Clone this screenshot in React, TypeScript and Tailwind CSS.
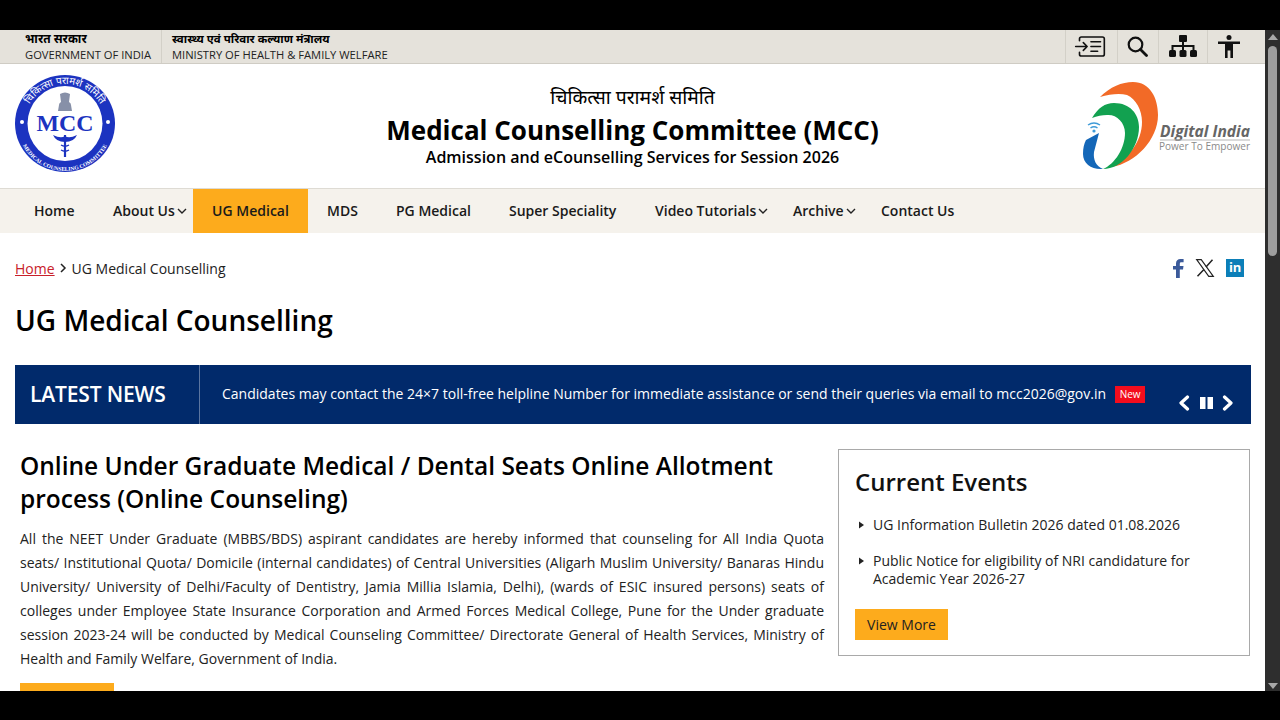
import React from "react";

const font = { fontFamily: '"Open Sans","Noto Sans","Noto Sans CJK SC",sans-serif' };

function MccLogo() {
  return (
    <svg width="100" height="97" viewBox="0 0 100 97" className="shrink-0 -mt-[5px] mr-[2px]">
      <defs>
        <path id="mccTop" d="M9 50 A41 41 0 0 1 91 50" />
        <path id="mccBottom" d="M3 50 A47 46 0 0 0 97 50" />
      </defs>
      <ellipse cx="50" cy="48.5" rx="50" ry="48.5" fill="#1c33c0" />
      <circle cx="50" cy="48.5" r="37.5" fill="#fff" />
      <text fontSize="10" fill="#fff" fontFamily="Noto Sans, sans-serif"><textPath href="#mccTop" startOffset="50%" textAnchor="middle">चिकित्सा परामर्श समिति</textPath></text>
      <text fontSize="5.6" fontWeight="700" fill="#fff" fontFamily="Liberation Serif, serif"><textPath href="#mccBottom" startOffset="50%" textAnchor="middle">MEDICAL COUNSELING COMMITTEE</textPath></text>
      <circle cx="7" cy="47" r="2" fill="#fff" />
      <circle cx="93" cy="47" r="2" fill="#fff" />
      <path d="M45 19 q5 -3 10 0 l-1 8 q2 1 2 3 l1 6 h-14 l1 -6 q0 -2 2 -3z" fill="#8790a8" />
      <text x="50" y="56" textAnchor="middle" fontSize="23" fontWeight="700" fill="#1c33c0" fontFamily="Liberation Serif, serif" textLength="57" lengthAdjust="spacingAndGlyphs">MCC</text>
      <path d="M50 60 L50 82" stroke="#1c33c0" strokeWidth="2.2" />
      <path d="M38 60 q8 4 12 1 q4 3 12 -1 q-3 7 -12 7 q-9 0 -12 -7z" fill="#1c33c0" />
      <path d="M46 70 q4 2.5 8 0 M46 75 q4 2.5 8 0" stroke="#1c33c0" strokeWidth="1.3" fill="none" />
    </svg>
  );
}

function DigitalIndia() {
  return (
    <svg width="174" height="92" viewBox="0 0 174 92" className="shrink-0 -mr-[4px]">
      <path d="M20 17 C30 7 42 2 53 2 C70 2 78 18 78 35 C78 60 55 83 32 87 C48 78 62 62 62 42 C62 30 56 19 47 15 C40 13 30 14 20 17Z" fill="#f26a27" />
      <path d="M12 38 C18 28 25 23 34 23 C50 23 59 34 59 47 C59 68 42 89 23 89 C35 84 45 68 45 53 C45 42 36 34 27 35 C22 35 17 36 12 38Z" fill="#12a150" />
      <path d="M6 60 L19 53 L14 72 C13 80 16 86 23 89 C12 90 3 84 3 74 C3 68 4 64 6 60Z" fill="#1467b8" />
      <path d="M8 45 q6 -4 12 0 M10.5 48 q3.5 -2.5 7 0" stroke="#3f9bd8" strokeWidth="1.5" fill="none" />
      <circle cx="14" cy="51" r="1.6" fill="#3f9bd8" />
      <text x="80" y="57" fontSize="15.5" fontStyle="italic" fontWeight="700" fill="#666" fontFamily="Open Sans, sans-serif" textLength="90" lengthAdjust="spacingAndGlyphs">Digital India</text>
      <path d="M80 60 H170" stroke="#b5b5b5" strokeWidth="1" />
      <text x="79" y="70" fontSize="10" fill="#8a8a8a" fontFamily="Open Sans, sans-serif" textLength="91" lengthAdjust="spacingAndGlyphs">Power To Empower</text>
    </svg>
  );
}

function TopIcon({ children, w }: { children: React.ReactNode; w: string }) {
  return <div className={`h-full flex items-center justify-center border-l border-[#d3d0c8] ${w}`}>{children}</div>;
}

const navItems: [string, boolean, string][] = [
  ["Home", false, "w-[79px]"],
  ["About Us", true, "w-[99px]"],
  ["MDS", false, "w-[69px]"],
  ["PG Medical", false, "w-[113px]"],
  ["Super Speciality", false, "w-[146px]"],
  ["Video Tutorials", true, "w-[138px]"],
  ["Archive", true, "w-[88px]"],
  ["Contact Us", false, "w-[113px]"],
];

function NavItem({ label, caret, w }: { label: string; caret: boolean; w: string }) {
  return (
    <div className={`h-full flex items-center pl-[19px] ${w}`}>
      <span>{label}</span>
      {caret && (
        <svg width="10" height="6" viewBox="0 0 10 6" fill="none" stroke="#222" strokeWidth="1.4" className="ml-[2px] mt-[1px] shrink-0">
          <path d="M1 1 L5 5 L9 1" />
        </svg>
      )}
    </div>
  );
}

export default function App() {
  return (
    <div className="h-[720px] w-[1280px] bg-black flex flex-col overflow-hidden text-[#111]" style={font}>
      <div className="h-[30px] shrink-0" />
      <div className="h-[661px] flex shrink-0">
        <main className="w-[1265px] bg-white overflow-hidden">
          <div className="h-[34px] bg-[#e5e2db] border-b border-[#cfccc4] flex pl-[25px] text-black">
            <div className="w-[137px] border-r border-[#d3d0c8] text-[11.2px] leading-[16px] pt-[1px]">
              <div className="text-[12px] leading-[16px] font-bold">भारत सरकार</div>
              <div className="text-[#222] whitespace-nowrap">GOVERNMENT OF INDIA</div>
            </div>
            <div className="pl-[10px] text-[11.2px] leading-[16px] pt-[1px]">
              <div className="text-[11.5px] font-bold">स्वास्थ्य एवं परिवार कल्याण मंत्रालय</div>
              <div className="text-[#222] whitespace-nowrap">MINISTRY OF HEALTH &amp; FAMILY WELFARE</div>
            </div>
            <div className="ml-auto flex h-full items-center">
              <TopIcon w="w-[52px]">
                <svg width="32" height="21" viewBox="0 0 32 22" fill="none" stroke="#111" strokeWidth="1.7" strokeLinecap="round" strokeLinejoin="round" className="mr-[3px] -mt-[1px]">
                  <path d="M5 5 V3 Q5 1 7 1 H29 Q31 1 31 3 V19 Q31 21 29 21 H7 Q5 21 5 19 V17" />
                  <path d="M1 11 H13 M9 7 L13 11 L9 15 M17 6 H27 M17 11 H27 M17 16 H24" />
                </svg>
              </TopIcon>
              <TopIcon w="w-[41px]">
                <svg width="21" height="21" viewBox="0 0 21 21" fill="none" stroke="#111" strokeWidth="2.2" strokeLinecap="round" className="mr-[1px] -mt-[1px]">
                  <circle cx="8.5" cy="8.5" r="6.8" />
                  <path d="M13.5 13.5 L19.5 19.5" strokeWidth="2.8" />
                </svg>
              </TopIcon>
              <TopIcon w="w-[49px]">
                <svg width="28" height="22" viewBox="0 0 28 22" fill="#111" className="-mt-[1px]">
                  <rect x="10" y="0" width="8" height="7" rx="1" />
                  <rect x="0" y="15" width="7" height="7" rx="1.5" />
                  <rect x="10.5" y="15" width="7" height="7" rx="1.5" />
                  <rect x="21" y="15" width="7" height="7" rx="1.5" />
                  <path d="M13 7 h2 v3 h10.5 v5 h-2 v-3 h-8.5 v3 h-2 v-3 h-8.5 v3 h-2 v-5 h10.5z" />
                </svg>
              </TopIcon>
              <TopIcon w="w-[58px]">
                <svg width="22" height="23" viewBox="0 0 22 23" fill="#111" className="mr-[16px] -mt-[1px]">
                  <circle cx="11" cy="2.5" r="2.5" />
                  <path d="M0 6.5 h22 v2.4 h-7 v14.1 h-2.6 v-7.5 h-2.8 v7.5 h-2.6 v-14.1 h-7z" />
                </svg>
              </TopIcon>
            </div>
          </div>

          <div className="h-[125px] border-b border-[#dedbd4] flex items-center pl-[15px] pr-[15px]">
            <MccLogo />
            <div className="flex-1 text-center text-black pl-[68px] -mt-[5px]">
              <div className="text-[19.3px] leading-[28px]">चिकित्सा परामर्श समिति</div>
              <div className="text-[26px] leading-[38px] font-bold whitespace-nowrap">Medical Counselling Committee (MCC)</div>
              <div className="text-[16px] leading-[16px] font-semibold">Admission and eCounselling Services for Session 2026</div>
            </div>
            <DigitalIndia />
          </div>

          <nav className="h-[44px] bg-[#f5f2ec] flex pl-[15px] pb-[2px] text-[14px] font-semibold text-[#1a1a1a]">
            <NavItem label={navItems[0][0]} caret={navItems[0][1]} w={navItems[0][2]} />
            <NavItem label={navItems[1][0]} caret={navItems[1][1]} w={navItems[1][2]} />
            <div className="h-[44px] w-[115px] bg-[#fdab1c] flex items-center justify-center pb-[2px]">UG Medical</div>
            {navItems.slice(2).map(([l, c, w]) => (
              <NavItem key={l} label={l} caret={c} w={w} />
            ))}
          </nav>

          <div className="h-[70px] flex items-center pl-[15px] pr-[21px] text-[14px] text-[#222]">
            <span className="text-[#c8202a] underline">Home</span>
            <svg width="8" height="10" viewBox="0 0 8 10" fill="none" stroke="#222" strokeWidth="1.5" className="ml-[4px] mr-[5px]"><path d="M2 1 L6 5 L2 9" /></svg>
            <span>UG Medical Counselling</span>
            <div className="ml-auto flex items-center">
              <svg width="11" height="19" viewBox="0 0 11 19" fill="#3b5a9a"><path d="M3 19 V10.5 H0 V7 H3 V4.5 C3 1.5 4.8 0 7.4 0 H10.6 V3.3 H8.3 C7.2 3.3 6.8 3.9 6.8 4.9 V7 H10.5 L10 10.5 H6.8 V19Z" /></svg>
              <svg width="20" height="20" viewBox="0 0 24 24" className="ml-[11px]" fill="none" stroke="#222" strokeWidth="1.4"><path d="M2 2 H7.5 L22 22 H16.5Z" /><path d="M21 2 L13.2 10.8 M10.7 13.7 L3 22" strokeWidth="1.8" /></svg>
              <div className="ml-[11px] w-[18px] h-[18px] bg-[#0c7fb8] text-white text-[13px] font-bold leading-[17px] text-center tracking-tight">in</div>
            </div>
          </div>

          <h1 className="pl-[15px] text-[28px] leading-[40px] text-black -mt-[3px] mb-[25px] font-semibold">UG Medical Counselling</h1>

          <section className="ml-[15px] mr-[14px] h-[59px] bg-[#012a6b] flex items-center text-white">
            <div className="w-[185px] h-full border-r border-[#5b75a0] flex items-center pl-[15px] text-[21px] font-semibold tracking-[-0.15px]">LATEST NEWS</div>
            <div className="pl-[22px] text-[14px] whitespace-nowrap -mt-[2px]">Candidates may contact the 24×7 toll-free helpline Number for immediate assistance or send their queries via email to mcc2026@gov.in</div>
            <span className="ml-[9px] bg-[#f40d1d] text-[10px] leading-[17px] w-[30px] text-center -mt-[1px]">New</span>
            <div className="ml-[33px] flex items-center mt-[17px]">
              <svg width="12" height="16" viewBox="0 0 12 16" fill="none" stroke="#fff" strokeWidth="3.2" strokeLinecap="round" strokeLinejoin="round"><path d="M9.5 2 L3 8 L9.5 14" /></svg>
              <svg width="13" height="12" viewBox="0 0 13 12" fill="#fff" className="ml-[10px]"><rect x="0" y="0" width="5.5" height="12" /><rect x="7.5" y="0" width="5.5" height="12" /></svg>
              <svg width="12" height="16" viewBox="0 0 12 16" fill="none" stroke="#fff" strokeWidth="3.2" strokeLinecap="round" strokeLinejoin="round" className="ml-[9px]"><path d="M2.5 2 L9 8 L2.5 14" /></svg>
            </div>
          </section>

          <div className="flex pl-[20px] pr-[15px] pt-[25px]">
            <div className="w-[804px] shrink-0">
              <h2 className="text-[24.5px] leading-[33px] font-semibold text-black">Online Under Graduate Medical / Dental Seats Online Allotment process (Online Counseling)</h2>
              <p className="text-[14px] leading-[24px] text-[#222] text-justify mt-[12px]">All the NEET Under Graduate (MBBS/BDS) aspirant candidates are hereby informed that counseling for All India Quota seats/ Institutional Quota/ Domicile (internal candidates) of Central Universities (Aligarh Muslim University/ Banaras Hindu University/ University of Delhi/Faculty of Dentistry, Jamia Millia Islamia, Delhi), (wards of ESIC insured persons) seats of colleges under Employee State Insurance Corporation and Armed Forces Medical College, Pune for the Under graduate session 2023-24 will be conducted by Medical Counseling Committee/ Directorate General of Health Services, Ministry of Health and Family Welfare, Government of India.</p>
              <div className="mt-[12px] h-[31px] w-[94px] bg-[#fdab1c]" />
            </div>
            <aside className="ml-[14px] w-[412px] h-[207px] border border-[#a9a9a9] pl-[16px] pr-[15px] shrink-0">
              <h3 className="text-[24px] leading-[33px] font-semibold text-[#111] mt-[15px]">Current Events</h3>
              <ul className="mt-[18px] text-[14px] leading-[18px] text-[#222]">
                <li className="flex mb-[18px]">
                  <svg width="18" height="18" viewBox="0 0 18 18" className="shrink-0" fill="#222"><path d="M4 5.5 L9 9 L4 12.5Z" /></svg>
                  <span>UG Information Bulletin 2026 dated 01.08.2026</span>
                </li>
                <li className="flex">
                  <svg width="18" height="18" viewBox="0 0 18 18" className="shrink-0" fill="#222"><path d="M4 5.5 L9 9 L4 12.5Z" /></svg>
                  <span>Public Notice for eligibility of NRI candidature for Academic Year 2026-27</span>
                </li>
              </ul>
              <div className="mt-[21px] w-[93px] h-[31px] bg-[#fdab1c] flex items-center justify-center text-[14px] text-[#222]">View More</div>
            </aside>
          </div>
        </main>
        <div className="w-[15px] bg-[#2e2e2e] relative flex flex-col items-center">
          <div className="mt-[4px] w-0 h-0 border-x-[5px] border-x-transparent border-b-[6px] border-b-[#a8a8a8]" />
          <div className="mt-[6px] w-[9px] h-[210px] rounded-full bg-[#9e9e9e]" />
          <div className="mt-auto mb-[2px] w-0 h-0 border-x-[5px] border-x-transparent border-t-[6px] border-t-[#a8a8a8]" />
        </div>
      </div>
    </div>
  );
}
